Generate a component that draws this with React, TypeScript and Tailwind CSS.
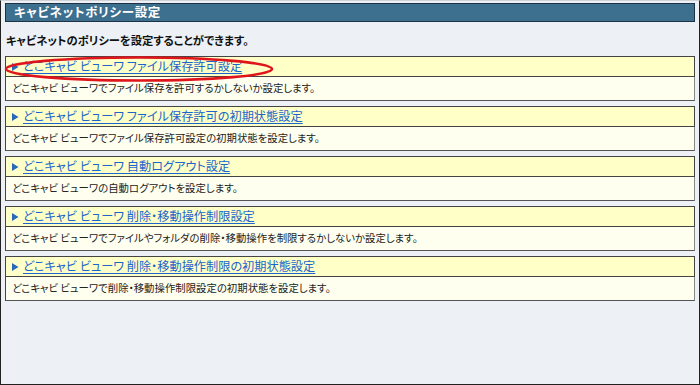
import React from "react";

const items = [
  {
    title: "どこキャビ ビューワ ファイル保存許可設定",
    desc: "どこキャビ ビューワでファイル保存を許可するかしないか設定します。",
  },
  {
    title: "どこキャビ ビューワ ファイル保存許可の初期状態設定",
    desc: "どこキャビ ビューワでファイル保存許可設定の初期状態を設定します。",
  },
  {
    title: "どこキャビ ビューワ 自動ログアウト設定",
    desc: "どこキャビ ビューワの自動ログアウトを設定します。",
  },
  {
    title: "どこキャビ ビューワ 削除・移動操作制限設定",
    desc: "どこキャビ ビューワでファイルやフォルダの削除・移動操作を制限するかしないか設定します。",
  },
  {
    title: "どこキャビ ビューワ 削除・移動操作制限の初期状態設定",
    desc: "どこキャビ ビューワで削除・移動操作制限設定の初期状態を設定します。",
  },
];

const font = {
  fontFamily: '"Noto Sans CJK JP", "Noto Sans", sans-serif',
  fontFeatureSettings: '"palt"',
};

export default function App() {
  return (
    <div
      className="relative w-[700px] h-[385px] bg-[#edf1f5] border border-[#222] border-t-[#cfd3d6] overflow-hidden"
      style={font}
    >
      <div className="mx-[4px] mt-[2px] h-[19px] bg-[#3d6f8f] border border-[#1d3345] flex items-center pl-[8px] text-white font-bold text-[12.5px] tracking-[0.7px] leading-none">
        キャビネットポリシー設定
      </div>
      <div className="px-[5px] mt-[11px] h-[16px] flex items-center text-[11.3px] font-bold text-[#111] leading-none">
        キャビネットのポリシーを設定することができます。
      </div>
      <div className="mx-[4px] mt-[7px] flex flex-col gap-[5px]">
        {items.map((it, i) => (
          <div key={i} className="flex flex-col">
            <div className="h-[21px] bg-[#ffffc8] border border-[#444] flex items-center pl-[5px] leading-none">
              <svg width="8" height="10" viewBox="0 0 8 10" className="mr-[4px]">
                <polygon points="1,1 7.5,5 1,9" fill="#2a69b8" />
              </svg>
              <a className="text-[12.2px] text-[#1a66cc] underline underline-offset-2 decoration-[#1a66cc]">
                {it.title}
              </a>
            </div>
            <div className="h-[24px] bg-[#fffff0] border border-[#444] border-t-0 border-r-[#888] border-b-[#555] flex items-center pl-[6px] text-[10.4px] text-[#222] leading-none">
              {it.desc}
            </div>
          </div>
        ))}
      </div>
      <svg
        className="absolute left-[2px] top-[54px] pointer-events-none"
        width="272"
        height="28"
        viewBox="0 0 272 28"
      >
        <ellipse cx="136" cy="14" rx="133" ry="11.5" fill="none" stroke="#e0141b" strokeWidth="2.6" />
      </svg>
    </div>
  );
}
